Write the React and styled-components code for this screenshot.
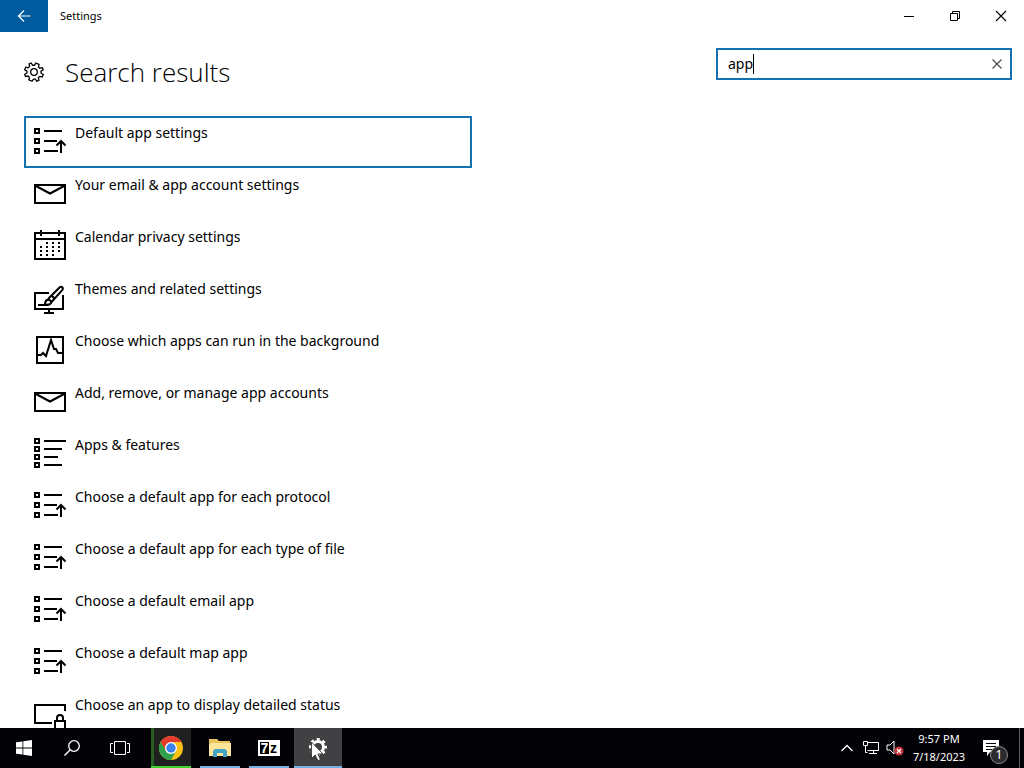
import React, { useState } from "react";
import styled, { createGlobalStyle } from "styled-components";

const GlobalStyle = createGlobalStyle`
  * {
    box-sizing: border-box;
  }
  body {
    margin: 0;
    background: #fff;
    color: #000;
    font-family: "Noto Sans", "Open Sans", sans-serif;
  }
  button, input {
    font: inherit;
    color: inherit;
    border: 0;
    padding: 0;
    background: none;
  }
  svg {
    display: block;
    flex: none;
    overflow: visible;
  }
`;

const Desktop = styled.div`
  display: flex;
  flex-direction: column;
  height: 100vh;
  overflow: hidden;
`;
const Window = styled.div`
  display: flex;
  flex-direction: column;
  flex: 1;
  min-height: 0;
`;
const TitleBar = styled.header`
  display: flex;
  align-items: center;
  height: 32px;
  flex: none;
`;
const BackButton = styled.button`
  display: flex;
  align-items: center;
  justify-content: center;
  width: 48px;
  height: 32px;
  background: #005a9e;
  color: #fff;
`;
const WindowTitle = styled.span`
  flex: 1;
  padding: 0 0 2px 12px;
  font-size: 11px;
`;
const CaptionButton = styled.button`
  display: flex;
  align-items: center;
  justify-content: center;
  width: 46px;
  height: 32px;
`;
const Page = styled.main`
  flex: 1;
  min-height: 0;
  padding: 16px 12px 0 24px;
  overflow: hidden;
`;
const PageHeader = styled.div`
  display: flex;
  align-items: flex-start;
  justify-content: space-between;
  margin-bottom: 20px;
`;
const Heading = styled.div`
  display: flex;
  align-items: center;
  gap: 21px;
  height: 48px;
`;
const PageTitle = styled.h1`
  margin: 0;
  font-family: "Open Sans", "Noto Sans", sans-serif;
  font-size: 26px;
  font-weight: 300;
  white-space: nowrap;
`;
const SearchBox = styled.label`
  display: flex;
  align-items: center;
  width: 296px;
  height: 32px;
  padding: 0 8px 0 10px;
  border: 2px solid #1173b0;
`;
const SearchInput = styled.input`
  field-sizing: content;
  max-width: 240px;
  padding-bottom: 2px;
  font-size: 14px;
  outline: none;
  caret-color: transparent;
`;
const Caret = styled.span`
  width: 1px;
  height: 20px;
  background: #000;
`;
const ClearButton = styled.button`
  margin-left: auto;
  color: #444;
`;
const ResultList = styled.ul`
  margin: 0;
  padding: 0;
  list-style: none;
  max-width: 448px;
`;
const ResultButton = styled.button`
  display: flex;
  align-items: flex-start;
  gap: 9px;
  width: 100%;
  height: 52px;
  padding: 5px 8px;
  border: 2px solid ${(props) => (props.$selected ? "#1173b0" : "transparent")};
  text-align: left;
  font-size: 14px;
  line-height: 20px;
  white-space: nowrap;

  svg {
    margin-top: 3px;
  }
`;

const Taskbar = styled.footer`
  display: flex;
  flex: none;
  height: 40px;
  background: #020207;
  color: #fff;
`;
const SystemButtons = styled.div`
  display: flex;
  margin-right: 3px;
`;
const TaskButton = styled.button`
  display: flex;
  align-items: center;
  justify-content: center;
  width: 48px;
  height: 40px;
`;
const RunningApps = styled.div`
  display: flex;
  gap: 1px;
  flex: 1;
`;
const AppButton = styled(TaskButton)`
  padding: ${(props) => (props.$active ? "0" : "0 4px")};
`;
const AppFace = styled.span`
  display: flex;
  align-items: center;
  justify-content: center;
  width: 100%;
  height: 40px;
  padding-top: 2px;
  background: ${(props) => props.$face || "transparent"};
  border-bottom: 2px solid ${(props) => props.$line};
  box-shadow: ${(props) => (props.$edge ? `inset 3px 0 ${props.$edge}` : "none")};
`;
const SevenZip = styled.span`
  display: flex;
  align-items: center;
  justify-content: center;
  width: 22px;
  height: 16px;
  border: 2px solid #fff;
  background: #fff;
  color: #000;
  font: bold 14px/12px "Liberation Sans", sans-serif;
`;
const SevenPart = styled.span`
  width: 9px;
  height: 12px;
  background: #000;
  color: #fff;
  text-align: center;
`;
const ZipPart = styled.span`
  width: 9px;
  text-align: center;
`;
const Tray = styled.div`
  display: flex;
  align-items: center;
`;
const TrayButton = styled.button`
  display: flex;
  align-items: center;
  justify-content: center;
  width: 24px;
  height: 40px;
`;
const Clock = styled.button`
  width: 64px;
  font-size: 11px;
  line-height: 18px;
  text-align: center;
  white-space: nowrap;
`;
const NotificationButton = styled.button`
  position: relative;
  display: flex;
  align-items: center;
  justify-content: center;
  width: 48px;
  height: 40px;
  padding-right: 8px;
`;
const Badge = styled.span`
  position: absolute;
  left: 19px;
  top: 18px;
  width: 18px;
  height: 18px;
  border: 1px solid #8a8a8a;
  border-radius: 50%;
  background: #2b2b2d;
  font-size: 12px;
  line-height: 16px;
  text-align: center;
`;
const ShowDesktop = styled.button`
  width: 5px;
  height: 40px;
  border-left: 1px solid #5c5c5c;
`;

const Icon = ({ size = 32, children }) => (
  <svg
    width={size}
    height={size}
    viewBox={`0 0 ${size} ${size}`}
    fill="none"
    stroke="currentColor"
    strokeWidth="2"
    aria-hidden="true"
  >
    {children}
  </svg>
);

const DefaultsIcon = () => (
  <Icon>
    <path d="M1 3h4v4H1zM1 13h4v4H1zM1 23h4v4H1z" />
    <path d="M10 5h18M10 15h13M10 25h14M27 27V15M22.500 19.500L27 15l4.500 4.500" />
  </Icon>
);
const AppsIcon = () => (
  <Icon>
    <path d="M1 1h4v4H1zM1 9h4v4H1zM1 17h4v4H1zM1 25h4v4H1z" />
    <path d="M10 3h22M10 11h18M10 19h14M10 27h18" />
  </Icon>
);
const MailIcon = () => (
  <Icon>
    <path d="M1 7h30v18H1z" />
    <path d="M1 7.500l15 8 15-8" />
  </Icon>
);
const CalendarIcon = () => (
  <Icon>
    <path d="M1 3h30v26H1zM1 9h30M7 0v6M25 0v6" />
    <path d="M7 16v12M13 12v16M19 12v16M25 12v12" strokeDasharray="2 2" />
  </Icon>
);
const ThemesIcon = () => (
  <Icon>
    <path d="M15 11H1v16h28V13M15 27v4M10 31h10" />
    <path d="M4 23h7M11 23c0-2 0-4 2-5 2-1 5 1 4 3-1 2-3 2-6 2z" />
    <path d="M14 17L25.500 5.500c2-2 4.500.5 2.700 2.700L17.500 20M17 13l4 4" />
  </Icon>
);
const ActivityIcon = () => (
  <Icon>
    <path d="M3 3h26v26H3z" />
    <path d="M4 21h3l2-2 3 3 5-16 3 9h2l2 4h4" />
  </Icon>
);
const LockScreenIcon = () => (
  <Icon>
    <path d="M31 13V7H1v18h17M21 32v-9h10v9M23 23v-3a3 3 0 0 1 6 0v3" />
  </Icon>
);

const gearPath =
  "M8.300 1h3.400l.5 2.600 1.700.7L16.100 2.800l1.500 1.500 -1.400 2.200.7 1.700 2.600.5v2.700l-2.600.5-.7 1.700 1.500 2.200-1.700 1.600-2.100-1.400-1.700.7-.5 2.600H8.300l-.5-2.600-1.700-.7-2.200 1.400-1.600-1.600 1.500-2.200-.7-1.700L.5 11.400V8.700l2.600-.5.7-1.700-1.500-2.200 1.600-1.500 2.200 1.500 1.700-.7z";

const SettingsGear = () => (
  <Icon size={20}>
    <path d={gearPath} strokeWidth="1.300" transform="rotate(22.500 10 10)" />
    <circle cx="10" cy="10" r="3.300" strokeWidth="1.300" />
  </Icon>
);

const ChromeIcon = () => (
  <svg width="24" height="24" viewBox="0 0 24 24" aria-hidden="true">
    <circle cx="12" cy="12" r="12" fill="#fbc116" />
    <path d="M12 6h10.400A12 12 0 0 0 1.600 6l5.200 9z" fill="#e33b2e" />
    <path d="M1.600 6A12 12 0 0 0 12 24l5.200-9-5.200 2-5.200-2z" fill="#2da14c" />
    <circle cx="12" cy="12" r="6" fill="#fff" />
    <circle cx="12" cy="12" r="4.700" fill="#3c82ee" />
  </svg>
);
const FolderIcon = () => (
  <svg width="22" height="20" viewBox="0 0 22 20" aria-hidden="true">
    <path d="M0 1h8l2 2h11v15H0z" fill="#e9c25c" />
    <path d="M2 5h20v13H0V7z" fill="#fae59a" />
    <path d="M4 19v-6l2-2h10l2 2v6h-4v-4H8v4z" fill="#42a5c5" />
  </svg>
);

// solid gear with the mouse pointer resting on it
const HoveredGear = () => (
  <svg width="24" height="24" viewBox="0 0 24 24" fill="none" aria-hidden="true">
    <circle cx="12" cy="11" r="5.500" stroke="#fff" strokeWidth="3" />
    <circle
      cx="12"
      cy="11"
      r="7.700"
      stroke="#fff"
      strokeWidth="2.600"
      strokeDasharray="3.024"
      strokeDashoffset="1.512"
    />
    <path
      d="M5.500 6v16.500l3.700-3.500 2.700 5.700 2.600-1.200-2.700-5.500h5.200z"
      fill="#fff"
      stroke="#222"
      strokeWidth=".8"
    />
  </svg>
);

const results = [
  { name: "Default app settings", icon: DefaultsIcon },
  { name: "Your email & app account settings", icon: MailIcon },
  { name: "Calendar privacy settings", icon: CalendarIcon },
  { name: "Themes and related settings", icon: ThemesIcon },
  { name: "Choose which apps can run in the background", icon: ActivityIcon },
  { name: "Add, remove, or manage app accounts", icon: MailIcon },
  { name: "Apps & features", icon: AppsIcon },
  { name: "Choose a default app for each protocol", icon: DefaultsIcon },
  { name: "Choose a default app for each type of file", icon: DefaultsIcon },
  { name: "Choose a default email app", icon: DefaultsIcon },
  { name: "Choose a default map app", icon: DefaultsIcon },
  { name: "Choose an app to display detailed status", icon: LockScreenIcon },
];

const SettingsWindow = () => {
  const [query, setQuery] = useState("app");
  const [selected, setSelected] = useState(0);

  return (
    <Window>
      <TitleBar>
        <BackButton aria-label="Back">
          <Icon size={14}>
            <path d="M13.500 7H1.500M7 1.500L1.500 7 7 12.500" strokeWidth="1.200" />
          </Icon>
        </BackButton>
        <WindowTitle>Settings</WindowTitle>
        <CaptionButton aria-label="Minimize">
          <Icon size={10}>
            <path d="M0 5.500h10" strokeWidth="1" />
          </Icon>
        </CaptionButton>
        <CaptionButton aria-label="Restore">
          <Icon size={10}>
            <path d="M.5 2.500h7v7h-7zM2.500 2.500v-2h7v7h-2" strokeWidth="1" />
          </Icon>
        </CaptionButton>
        <CaptionButton aria-label="Close">
          <Icon size={10}>
            <path d="M0 0l10 10M10 0L0 10" strokeWidth="1.100" />
          </Icon>
        </CaptionButton>
      </TitleBar>
      <Page>
        <PageHeader>
          <Heading>
            <SettingsGear />
            <PageTitle>Search results</PageTitle>
          </Heading>
          <SearchBox>
            <SearchInput
              aria-label="Find a setting"
              value={query}
              onChange={(e) => setQuery(e.target.value)}
            />
            <Caret />
            <ClearButton aria-label="Clear" onClick={() => setQuery("")}>
              <Icon size={10}>
                <path d="M.5 .5l9 9M9.500 .5l-9 9" strokeWidth="1.100" />
              </Icon>
            </ClearButton>
          </SearchBox>
        </PageHeader>
        <ResultList>
          {results.map(({ name, icon: ResultIcon }, index) => (
            <li key={name}>
              <ResultButton
                $selected={index === selected}
                onClick={() => setSelected(index)}
              >
                <ResultIcon />
                {name}
              </ResultButton>
            </li>
          ))}
        </ResultList>
      </Page>
    </Window>
  );
};

const App = () => (
  <Desktop>
    <GlobalStyle />
    <SettingsWindow />
    <Taskbar>
      <SystemButtons>
        <TaskButton aria-label="Start">
          <svg width="16" height="16" viewBox="0 0 16 16" fill="#fff">
            <path d="M0 2.300L6.500 1.400v6.200H0zM7.300 1.200L16 0v7.600H7.300zM0 8.400h6.500v6.200L0 13.700zM7.300 8.400H16V16l-8.700-1.200z" />
          </svg>
        </TaskButton>
        <TaskButton aria-label="Search">
          <Icon size={16}>
            <circle cx="10" cy="6" r="5.300" strokeWidth="1.300" />
            <path d="M6.300 9.800L.5 15.500" strokeWidth="1.400" />
          </Icon>
        </TaskButton>
        <TaskButton aria-label="Task View">
          <Icon size={20}>
            <path
              d="M4.500 3.500h11v13h-11zM3 5.500H.5v9H3M17 5.500h2.500v9H17"
              strokeWidth="1"
            />
          </Icon>
        </TaskButton>
      </SystemButtons>
      <RunningApps>
        <AppButton aria-label="Chrome">
          <AppFace $face="#202021" $line="#3fd42c" $edge="#275f20">
            <ChromeIcon />
          </AppFace>
        </AppButton>
        <AppButton aria-label="File Explorer">
          <AppFace $line="#76b0e4">
            <FolderIcon />
          </AppFace>
        </AppButton>
        <AppButton aria-label="7-Zip">
          <AppFace $line="#76b0e4">
            <SevenZip>
              <SevenPart>7</SevenPart>
              <ZipPart>z</ZipPart>
            </SevenZip>
          </AppFace>
        </AppButton>
        <AppButton $active aria-label="Settings">
          <AppFace $face="#414144" $line="#76b0e4">
            <HoveredGear />
          </AppFace>
        </AppButton>
      </RunningApps>
      <Tray>
        <TrayButton aria-label="Show hidden icons">
          <Icon size={12}>
            <path d="M.5 9L6 3.500 11.500 9" strokeWidth="1.300" />
          </Icon>
        </TrayButton>
        <TrayButton aria-label="Network">
          <Icon size={16}>
            <path
              d="M4.500 2.500h11v8h-11M.5 1.500h4v4h-4zM2.500 5.500v7h2M10.500 10.500v3M6 13.500h8"
              strokeWidth="1"
            />
          </Icon>
        </TrayButton>
        <TrayButton aria-label="Volume muted">
          <Icon size={18}>
            <path d="M1 6h3l4-4v13l-4-4H1z" strokeWidth="1" />
            <circle cx="13" cy="12" r="4.500" fill="#c9303a" stroke="none" />
            <path d="M11 10l4 4M15 10l-4 4" stroke="#fff" strokeWidth="1.200" />
          </Icon>
        </TrayButton>
        <Clock>
          9:57 PM
          <br />
          7/18/2023
        </Clock>
        <NotificationButton aria-label="Notifications">
          <svg width="16" height="16" viewBox="0 0 16 16">
            <path d="M0 0h16v12H7l-3 4v-4H0z" fill="#fff" />
            <path d="M3 3.500h10M3 6.500h10M3 9.500h7" stroke="#020207" />
          </svg>
          <Badge>1</Badge>
        </NotificationButton>
        <ShowDesktop aria-label="Show desktop" />
      </Tray>
    </Taskbar>
  </Desktop>
);

export default App;
